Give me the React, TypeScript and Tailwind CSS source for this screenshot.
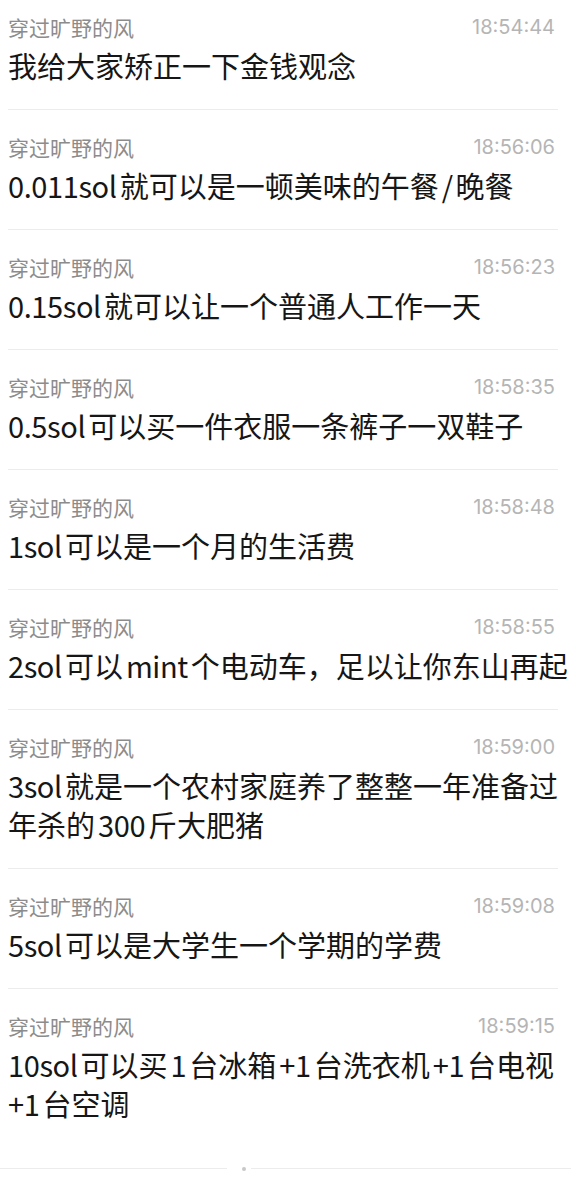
import React from 'react';

type Msg = {
  time: string;
  lines: string[];
};

const messages: Msg[] = [
  { time: '18:54:44', lines: ['我给大家矫正一下金钱观念'] },
  { time: '18:56:06', lines: ['0.011sol就可以是一顿美味的午餐/晚餐'] },
  { time: '18:56:23', lines: ['0.15sol就可以让一个普通人工作一天'] },
  { time: '18:58:35', lines: ['0.5sol可以买一件衣服一条裤子一双鞋子'] },
  { time: '18:58:48', lines: ['1sol可以是一个月的生活费'] },
  { time: '18:58:55', lines: ['2sol可以mint个电动车，足以让你东山再起'] },
  { time: '18:59:00', lines: ['3sol就是一个农村家庭养了整整一年准备过', '年杀的300斤大肥猪'] },
  { time: '18:59:08', lines: ['5sol可以是大学生一个学期的学费'] },
  { time: '18:59:15', lines: ['10sol可以买1台冰箱+1台洗衣机+1台电视', '+1台空调'] },
];

const font = { fontFamily: '"Noto Sans CJK SC", "Noto Sans", sans-serif' };

// latin runs get a little air around them, like the phone's auto-spacing
function Line({ text }: { text: string }) {
  const parts = text.split(/([0-9A-Za-z.+/]+)/).filter(Boolean);
  return (
    <div>
      {parts.map((p, i) =>
        /^[0-9A-Za-z.+/]+$/.test(p) ? (
          <span key={i} className={`tracking-[-0.4px] ${i === 0 ? 'mr-[3px]' : 'mx-[3px]'}`}>
            {p}
          </span>
        ) : (
          <span key={i}>{p}</span>
        )
      )}
    </div>
  );
}

export default function App() {
  return (
    <div className="w-[576px] h-[1200px] bg-white overflow-hidden" style={font}>
      {messages.map((m, i) => (
        <div
          key={m.time}
          className={`ml-2 mr-[18px] ${i === 0 ? 'pt-[15px]' : 'pt-[25px]'} ${
            i === messages.length - 1 ? 'pb-[45px]' : 'pb-[24px] border-b border-[#ececec]'
          }`}
        >
          <div className="flex items-center justify-between h-6">
            <span className="text-[21px] text-[#8c8c8c] leading-6">穿过旷野的风</span>
            <span className="text-[20px] text-[#b5b5b5] leading-6 pr-[3px] font-[Inter]">{m.time}</span>
          </div>
          <div className="mt-[7px] text-[29px] text-[#161616] leading-[39px] whitespace-nowrap">
            {m.lines.map((l) => (
              <Line key={l} text={l} />
            ))}
          </div>
        </div>
      ))}
      <div className="flex items-center h-px">
        <div className="w-[227px] h-px bg-[#ececec]" />
        <div className="ml-[15px] w-[4px] h-[4px] rounded-full bg-[#c8c8c8]" />
        <div className="ml-[5px] w-[320px] h-px bg-[#ececec]" />
      </div>
    </div>
  );
}
